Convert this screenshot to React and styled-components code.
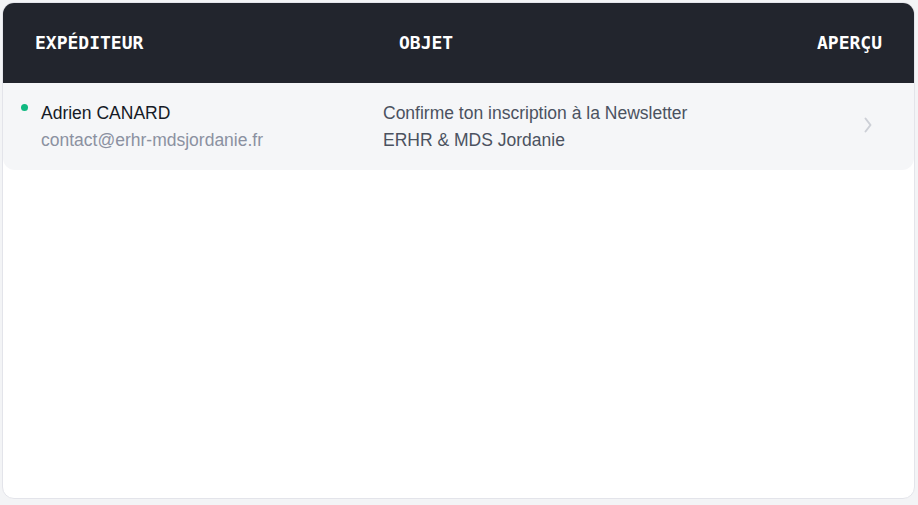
import React from 'react';
import styled, { createGlobalStyle } from 'styled-components';

const GlobalStyle = createGlobalStyle`
  html, body {
    margin: 0;
    padding: 0;
    background: #f3f4f6;
  }
  body {
    font-family: "Liberation Sans", Arial, sans-serif;
  }
`;

const Page = styled.div`
  padding: 2px 3px 6px 2px;
  box-sizing: border-box;
  height: 505px;
`;

const Card = styled.div`
  height: 100%;
  box-sizing: border-box;
  background: #ffffff;
  border: 1px solid #e3e4ea;
  border-radius: 12px;
  overflow: hidden;
`;

const Header = styled.div`
  display: flex;
  align-items: center;
  height: 80px;
  padding: 0 32px 2px 32px;
  box-sizing: border-box;
  background: #22252d;
  color: #ffffff;
  font-family: "DejaVu Sans Mono", "Liberation Mono", monospace;
  font-weight: bold;
  font-size: 18px;
`;

const HeadCell = styled.div`
  flex: ${({ grow }) => (grow ? 1 : 'none')};
  width: ${({ width }) => (width ? `${width}px` : 'auto')};
  text-align: ${({ align }) => align || 'left'};
`;

const Row = styled.div`
  display: flex;
  align-items: center;
  padding: 17px 42px 16px 17px;
  background: #f5f6f8;
  border-radius: 0 0 12px 12px;
  font-size: 17.5px;
  line-height: 27px;
  cursor: pointer;
`;

const Sender = styled.div`
  display: flex;
  align-items: flex-start;
  width: 363px;
`;

const Dot = styled.span`
  width: 7px;
  height: 7px;
  border-radius: 50%;
  background: #10b981;
  margin: 4px 13px 0 1px;
  flex: none;
`;

const Lines = styled.div`
  display: flex;
  flex-direction: column;
`;

const Name = styled.span`
  color: #161b26;
`;

const Email = styled.span`
  color: #8b91a1;
`;

const Subject = styled.div`
  flex: 1;
  color: #4b5260;
`;

const ChevronIcon = styled.svg`
  flex: none;
  margin-bottom: 5px;
`;

const Chevron = () => (
  <ChevronIcon width="8" height="16" viewBox="0 0 8 16" fill="none">
    <path d="M1.5 1.5 L6.5 8 L1.5 14.5" stroke="#cdd0d7" strokeWidth="2" strokeLinecap="round" strokeLinejoin="round" />
  </ChevronIcon>
);

const messages = [
  {
    id: 1,
    name: 'Adrien CANARD',
    email: 'contact@erhr-mdsjordanie.fr',
    subject: ['Confirme ton inscription à la Newsletter', 'ERHR & MDS Jordanie'],
  },
];

const App = () => (
  <>
    <GlobalStyle />
    <Page>
      <Card>
        <Header>
          <HeadCell width={364}>EXPÉDITEUR</HeadCell>
          <HeadCell grow>OBJET</HeadCell>
          <HeadCell align="right">APERÇU</HeadCell>
        </Header>
        {messages.map(msg => (
          <Row key={msg.id}>
            <Sender>
              <Dot />
              <Lines>
                <Name>{msg.name}</Name>
                <Email>{msg.email}</Email>
              </Lines>
            </Sender>
            <Subject>
              {msg.subject.map(line => (
                <div key={line}>{line}</div>
              ))}
            </Subject>
            <Chevron />
          </Row>
        ))}
      </Card>
    </Page>
  </>
);

export default App;
